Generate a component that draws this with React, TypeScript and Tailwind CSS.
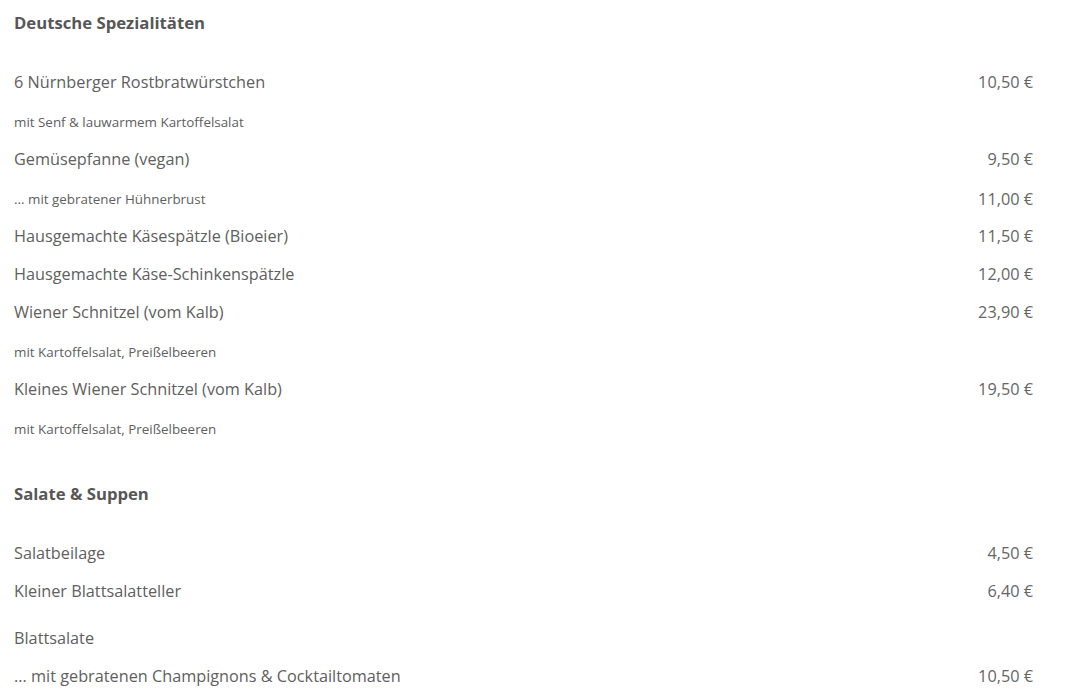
const font = { fontFamily: '"Open Sans", "Noto Sans", sans-serif' };

type Row =
  | { kind: "main"; name: string; price?: string; gap?: boolean }
  | { kind: "sub"; name: string; price?: string };

const sections: { title: string; rows: Row[] }[] = [
  {
    title: "Deutsche Spezialitäten",
    rows: [
      { kind: "main", name: "6 Nürnberger Rostbratwürstchen", price: "10,50 €" },
      { kind: "sub", name: "mit Senf & lauwarmem Kartoffelsalat" },
      { kind: "main", name: "Gemüsepfanne (vegan)", price: "9,50 €" },
      { kind: "sub", name: "... mit gebratener Hühnerbrust", price: "11,00 €" },
      { kind: "main", name: "Hausgemachte Käsespätzle (Bioeier)", price: "11,50 €" },
      { kind: "main", name: "Hausgemachte Käse-Schinkenspätzle", price: "12,00 €" },
      { kind: "main", name: "Wiener Schnitzel (vom Kalb)", price: "23,90 €" },
      { kind: "sub", name: "mit Kartoffelsalat, Preißelbeeren" },
      { kind: "main", name: "Kleines Wiener Schnitzel (vom Kalb)", price: "19,50 €" },
      { kind: "sub", name: "mit Kartoffelsalat, Preißelbeeren" },
    ],
  },
  {
    title: "Salate & Suppen",
    rows: [
      { kind: "main", name: "Salatbeilage", price: "4,50 €" },
      { kind: "main", name: "Kleiner Blattsalatteller", price: "6,40 €" },
      { kind: "main", name: "Blattsalate", gap: true },
      { kind: "main", name: "... mit gebratenen Champignons & Cocktailtomaten", price: "10,50 €" },
    ],
  },
];

const MenuRow = ({ row }: { row: Row }) => {
  if (row.kind === "sub") {
    return (
      <div className="flex h-[39px] items-center justify-between pt-[4px]">
        <span className="text-[13.4px] text-[#606060]">{row.name}</span>
        {row.price && <span className="text-[16.25px] text-[#666]">{row.price}</span>}
      </div>
    );
  }
  return (
    <div className={`flex h-[38px] items-center justify-between ${row.gap ? "mt-[9px]" : ""}`}>
      <span className="text-[16.25px] text-[#606060]">{row.name}</span>
      {row.price && <span className="text-[16.25px] text-[#666]">{row.price}</span>}
    </div>
  );
};

export default function App() {
  return (
    <div className="min-h-[700px] bg-white pl-[14px] pr-[42px]" style={font}>
      {sections.map((s, i) => (
        <section key={s.title} className={i > 0 ? "mt-[24px]" : ""}>
          <h2 className="flex h-[46px] items-center text-[16.7px] font-bold text-[#575757]">
            {s.title}
          </h2>
          <div className="mt-[17px] flex flex-col">
            {s.rows.map((r, j) => (
              <MenuRow key={j} row={r} />
            ))}
          </div>
        </section>
      ))}
    </div>
  );
}
